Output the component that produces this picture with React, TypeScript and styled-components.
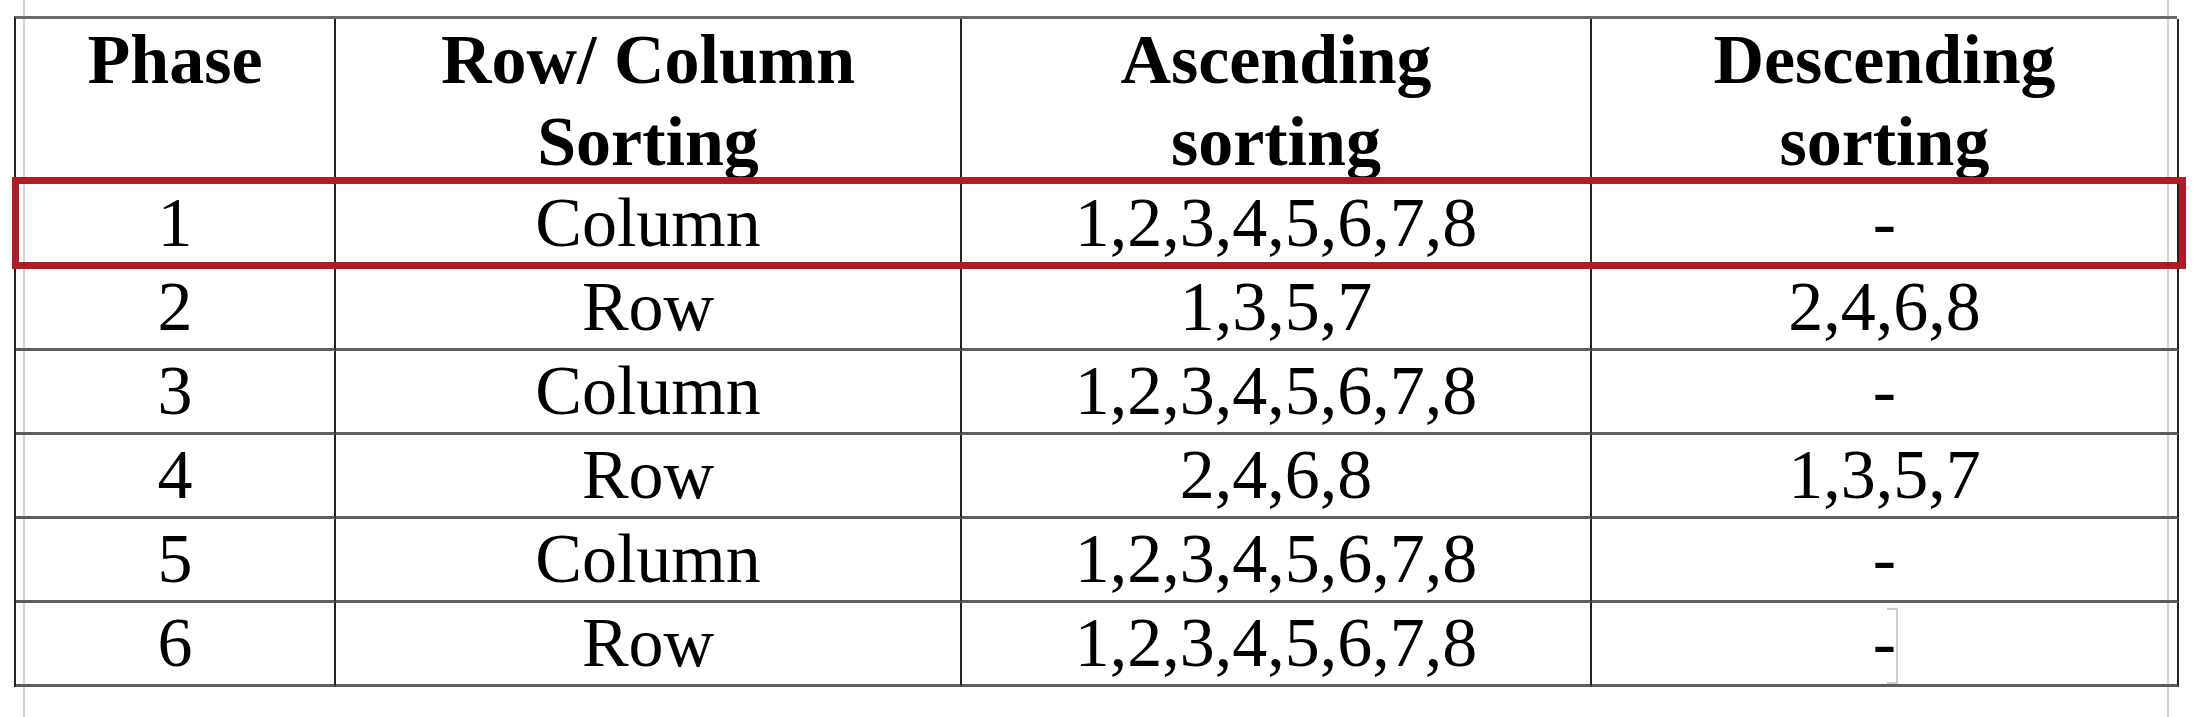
import styled, { createGlobalStyle } from "styled-components";

const GlobalStyle = createGlobalStyle`
  html, body {
    margin: 0;
    padding: 0;
    background-color: #ffffff;
  }
  body {
    width: 2204px;
    height: 717px;
    overflow: hidden;
    font-family: "Liberation Serif", "Times New Roman", serif;
    color: #000;
    /* page margin guides of the document view */
    background-image:
      linear-gradient(to right, transparent 23px, #d4d4d4 23px, #d4d4d4 25px, transparent 25px),
      linear-gradient(to right, transparent 2167px, #d4d4d4 2167px, #d4d4d4 2169px, transparent 2169px);
  }
`;

const Page = styled.div`
  padding: 16px 0 0 14px;
`;

const TableWrap = styled.div`
  position: relative;
  width: 2163px;
`;

const Grid = styled.div`
  display: grid;
  grid-template-columns: 320px 626px 630px 587px;
  border-top: 3px solid #6a6a6a;
  border-left: 2px solid #222;
`;

const Cell = styled.div<{ $head?: boolean }>`
  box-sizing: border-box;
  height: ${({ $head }) => ($head ? "164px" : "84px")};
  border-right: 2px solid #222;
  border-bottom: 3px solid #5e5e5e;
  text-align: center;
  font-size: 70px;
  line-height: ${({ $head }) => ($head ? "82px" : "80px")};
  font-weight: ${({ $head }) => ($head ? 700 : 400)};
  white-space: nowrap;
`;

const Highlight = styled.div`
  position: absolute;
  left: -2px;
  top: 161px;
  width: 2174px;
  height: 92px;
  box-sizing: border-box;
  border: 7px solid #ae1c27;
  pointer-events: none;
`;

const Dash = styled.span<{ $caret?: boolean }>`
  position: relative;
  &::after {
    content: "";
    display: ${({ $caret }) => ($caret ? "block" : "none")};
    position: absolute;
    left: 14px;
    top: 4px;
    width: 9px;
    height: 72px;
    border: 2px solid #cdcdcd;
    border-left: none;
  }
`;

const rows = [
  ["1", "Column", "1,2,3,4,5,6,7,8", "-"],
  ["2", "Row", "1,3,5,7", "2,4,6,8"],
  ["3", "Column", "1,2,3,4,5,6,7,8", "-"],
  ["4", "Row", "2,4,6,8", "1,3,5,7"],
  ["5", "Column", "1,2,3,4,5,6,7,8", "-"],
  ["6", "Row", "1,2,3,4,5,6,7,8", "-"],
];

export default function App() {
  return (
    <>
      <GlobalStyle />
      <Page>
        <TableWrap>
          <Grid>
            <Cell $head>Phase</Cell>
            <Cell $head>
              Row/ Column
              <br />
              Sorting
            </Cell>
            <Cell $head>
              Ascending
              <br />
              sorting
            </Cell>
            <Cell $head>
              Descending
              <br />
              sorting
            </Cell>
            {rows.map((r, i) =>
              r.map((v, j) => (
                <Cell key={`${i}-${j}`}>
                  {v === "-" ? <Dash $caret={i === 5}>-</Dash> : v}
                </Cell>
              ))
            )}
          </Grid>
          <Highlight />
        </TableWrap>
      </Page>
    </>
  );
}
